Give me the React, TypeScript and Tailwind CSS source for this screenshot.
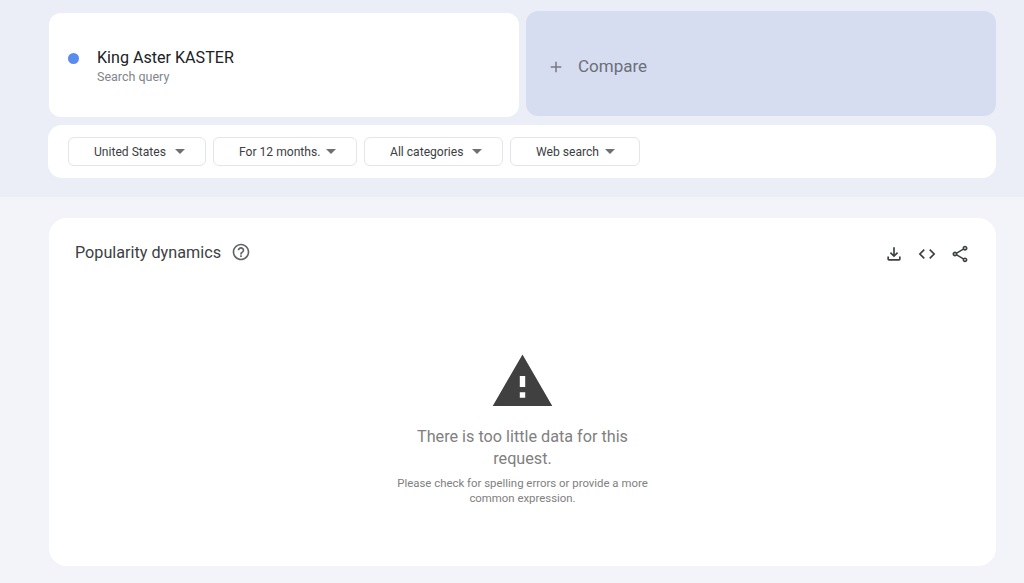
const font = { fontFamily: "Roboto, 'Noto Sans', sans-serif" };

function Icon({ d, size, className }: { d: string; size: number; className?: string }) {
  return (
    <svg width={size} height={size} viewBox="0 0 24 24" fill="currentColor" className={className}>
      <path d={d} />
    </svg>
  );
}

function Filter({ label, width, gap }: { label: string; width: string; gap: string }) {
  return (
    <div className={`${width} ${gap} flex h-[29px] shrink-0 items-center rounded-[6px] border border-[#e3e5ea] pl-[25px] text-[12.1px] text-[#3c4043]`}>
      <span className="mt-[2px]">{label}</span>
      <span className="h-0 w-0 border-x-[5px] border-t-[5px] border-x-transparent border-t-[#707070]" />
    </div>
  );
}

export default function App() {
  return (
    <div style={font} className="h-[583px] w-[1024px] overflow-hidden bg-[#f2f4f9]">
      <div className="h-[197px] bg-[#ebeef6] pl-[48px] pr-[28px] pt-[11px]">
        <div className="flex h-[106px] gap-[7px] pl-[1px]">
          <div className="mt-[2px] flex h-[104px] w-[470px] items-start rounded-[12px] bg-white pl-[19px] pt-[32px]">
            <span className="mt-[8px] h-[11px] w-[11px] rounded-full bg-[#588cef]" />
            <div className="ml-[18px] mt-[2px]">
              <div className="text-[16.1px] leading-[22px] text-[#202124]">King Aster KASTER</div>
              <div className="text-[12.5px] leading-[16px] text-[#80868b]">Search query</div>
            </div>
          </div>
          <div className="flex h-[105px] w-[470px] items-center rounded-[12px] bg-[#d7ddf1] pl-[21px] pt-[6px] text-[#6b6f78]">
            <Icon size={18} d="M19 13h-6v6h-2v-6H5v-2h6V5h2v6h6v2z" className="opacity-90" />
            <span className="ml-[13px] text-[17px]" style={{ fontWeight: 450 }}>Compare</span>
          </div>
        </div>
        <div className="mt-[8px] flex h-[53px] w-[948px] items-center gap-[7px] rounded-[14px] bg-white pl-[20px]">
          <Filter label="United States" width="w-[138px]" gap="gap-[9px]" />
          <Filter label="For 12 months." width="w-[144px]" gap="gap-[6px]" />
          <Filter label="All categories" width="w-[139px]" gap="gap-[9px]" />
          <Filter label="Web search" width="w-[130px]" gap="gap-[6px]" />
        </div>
      </div>
      <div className="ml-[49px] mt-[21px] h-[348px] w-[947px] rounded-[18px] bg-white">
        <div className="flex items-center pl-[26px] pr-[26px] pt-[21px] text-[#3c4043]">
          <span className="mt-[2px] text-[16.2px] leading-[24px]">Popularity dynamics</span>
          <Icon size={20} className="ml-[10px] text-[#5f6368]" d="M11 18h2v-2h-2v2zm1-16C6.48 2 2 6.48 2 12s4.48 10 10 10 10-4.48 10-10S17.52 2 12 2zm0 18c-4.41 0-8-3.59-8-8s3.59-8 8-8 8 3.59 8 8-3.59 8-8 8zm0-14c-2.21 0-4 1.79-4 4h2c0-1.1.9-2 2-2s2 .9 2 2c0 2-3 1.75-3 5h2c0-2.25 3-2.5 3-5 0-2.21-1.79-4-4-4z" />
          <div className="ml-auto flex gap-[13px] pt-[3px]">
            <Icon size={20} d="M18 15v3H6v-3H4v3c0 1.1.9 2 2 2h12c1.1 0 2-.9 2-2v-3h-2zm-1-4l-1.41-1.41L13 12.17V4h-2v8.17L8.41 9.59 7 11l5 5 5-5z" />
            <Icon size={20} d="M9.4 16.6L4.8 12l4.6-4.6L8 6l-6 6 6 6 1.4-1.4zm5.2 0l4.6-4.6-4.6-4.6L16 6l6 6-6 6-1.4-1.4z" />
            <Icon size={20} d="M18 16.08c-.76 0-1.44.3-1.96.77L8.91 12.7c.05-.23.09-.46.09-.7s-.04-.47-.09-.7l7.05-4.11c.54.5 1.25.81 2.04.81 1.66 0 3-1.34 3-3s-1.34-3-3-3-3 1.34-3 3c0 .24.04.47.09.7L8.04 9.81C7.5 9.31 6.79 9 6 9c-1.66 0-3 1.34-3 3s1.34 3 3 3c.79 0 1.5-.31 2.04-.81l7.12 4.16c-.05.21-.08.43-.08.65 0 1.61 1.31 2.92 2.92 2.92s2.92-1.31 2.92-2.92c0-1.61-1.31-2.92-2.92-2.92zM18 4c.55 0 1 .45 1 1s-.45 1-1 1-1-.45-1-1 .45-1 1-1zM6 13c-.55 0-1-.45-1-1s.45-1 1-1 1 .45 1 1-.45 1-1 1zm12 7.02c-.55 0-1-.45-1-1s.45-1 1-1 1 .45 1 1-.45 1-1 1z" />
          </div>
        </div>
        <div className="mt-[84px] flex flex-col items-center text-center">
          <Icon size={65} className="text-[#404040]" d="M1 21h22L12 2 1 21zm12-3h-2v-2h2v2zm0-4h-2v-4h2v4z" />
          <div className="mt-[12px] w-[260px] text-[16.2px] leading-[22px] text-[#808080]">There is too little data for this request.</div>
          <div className="mt-[6px] w-[260px] text-[11.4px] leading-[15px] text-[#808080]">Please check for spelling errors or provide a more common expression.</div>
        </div>
      </div>
    </div>
  );
}
